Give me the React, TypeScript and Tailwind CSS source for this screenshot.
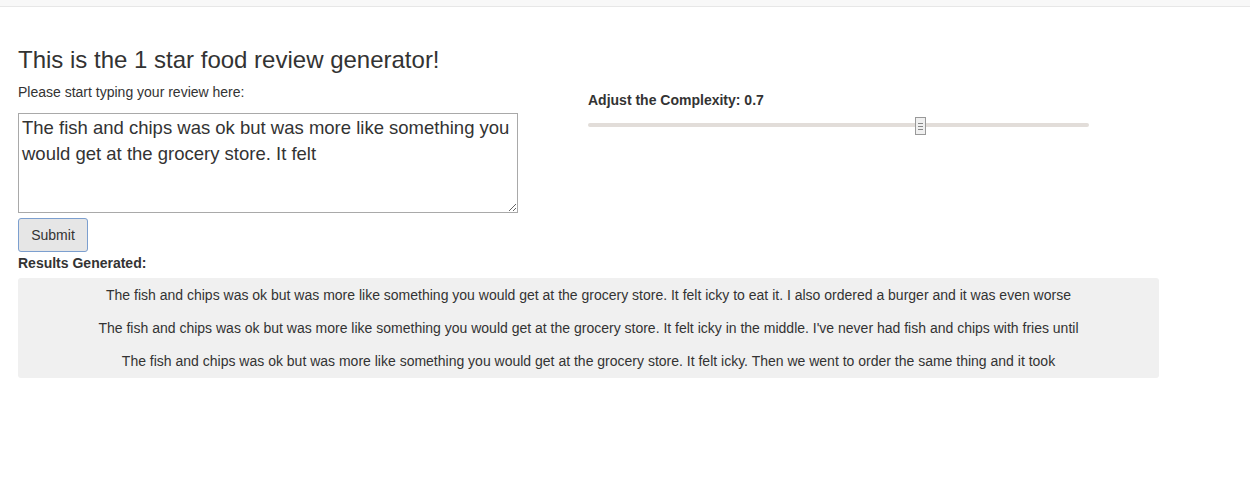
import React from "react";

export default function App() {
  const results = [
    "The fish and chips was ok but was more like something you would get at the grocery store. It felt icky to eat it. I also ordered a burger and it was even worse",
    "The fish and chips was ok but was more like something you would get at the grocery store. It felt icky in the middle. I've never had fish and chips with fries until",
    "The fish and chips was ok but was more like something you would get at the grocery store. It felt icky. Then we went to order the same thing and it took",
  ];
  return (
    <div className="min-h-[498px] bg-white text-[#333] font-['Liberation_Sans',Arial,sans-serif] text-[14px]">
      <div className="h-[7px] bg-[#f8f8f8] border-b border-[#e7e7e7]" />
      <div className="px-[18px]">
        <h3 className="text-[24px] leading-[26px] mt-[40px] mb-[9px] font-normal">
          This is the 1 star food review generator!
        </h3>
        <div className="flex">
          <div className="w-[570px]">
            <div className="text-[14px] leading-[20px] mb-[11px]">Please start typing your review here:</div>
            <textarea
              className="block w-[500px] h-[100px] border border-[#a9a9a9] px-[3px] py-[1px] text-[18.5px] leading-[26px] text-[#333] resize-y font-['Liberation_Sans',Arial,sans-serif]"
              spellCheck={false}
              defaultValue="The fish and chips was ok but was more like something you would get at the grocery store. It felt"
            />
            <button className="mt-[5px] w-[70px] h-[34px] bg-[#e6e6e6] border border-[#7c9fcf] rounded-[3px] text-[14px] text-[#333]">
              Submit
            </button>
          </div>
          <div className="w-[501px] pt-[10px]">
            <div className="text-[14px] font-bold leading-[16px] text-[#333]">Adjust the Complexity: 0.7</div>
            <div className="relative mt-[15px] h-[4px] bg-[#e2ddd9] rounded-[2px]">
              <div className="absolute left-[327px] top-[-6px] w-[11px] h-[18px] bg-[#f0f0f0] border border-[#999] flex flex-col items-center justify-center gap-[2px]">
                <div className="w-[5px] h-px bg-[#888]" />
                <div className="w-[5px] h-px bg-[#888]" />
                <div className="w-[5px] h-px bg-[#888]" />
              </div>
            </div>
          </div>
        </div>
        <div className="font-bold text-[14px] leading-[20px] mt-[1px]">Results Generated:</div>
        <div className="mt-[5px] w-[1141px] bg-[#f0f0f0] rounded-[3px] py-[7px] flex flex-col items-center gap-[13px]">
          {results.map((r, i) => (
            <div key={i} className="text-[14px] leading-[20px] text-[#333]">{r}</div>
          ))}
        </div>
      </div>
    </div>
  );
}
